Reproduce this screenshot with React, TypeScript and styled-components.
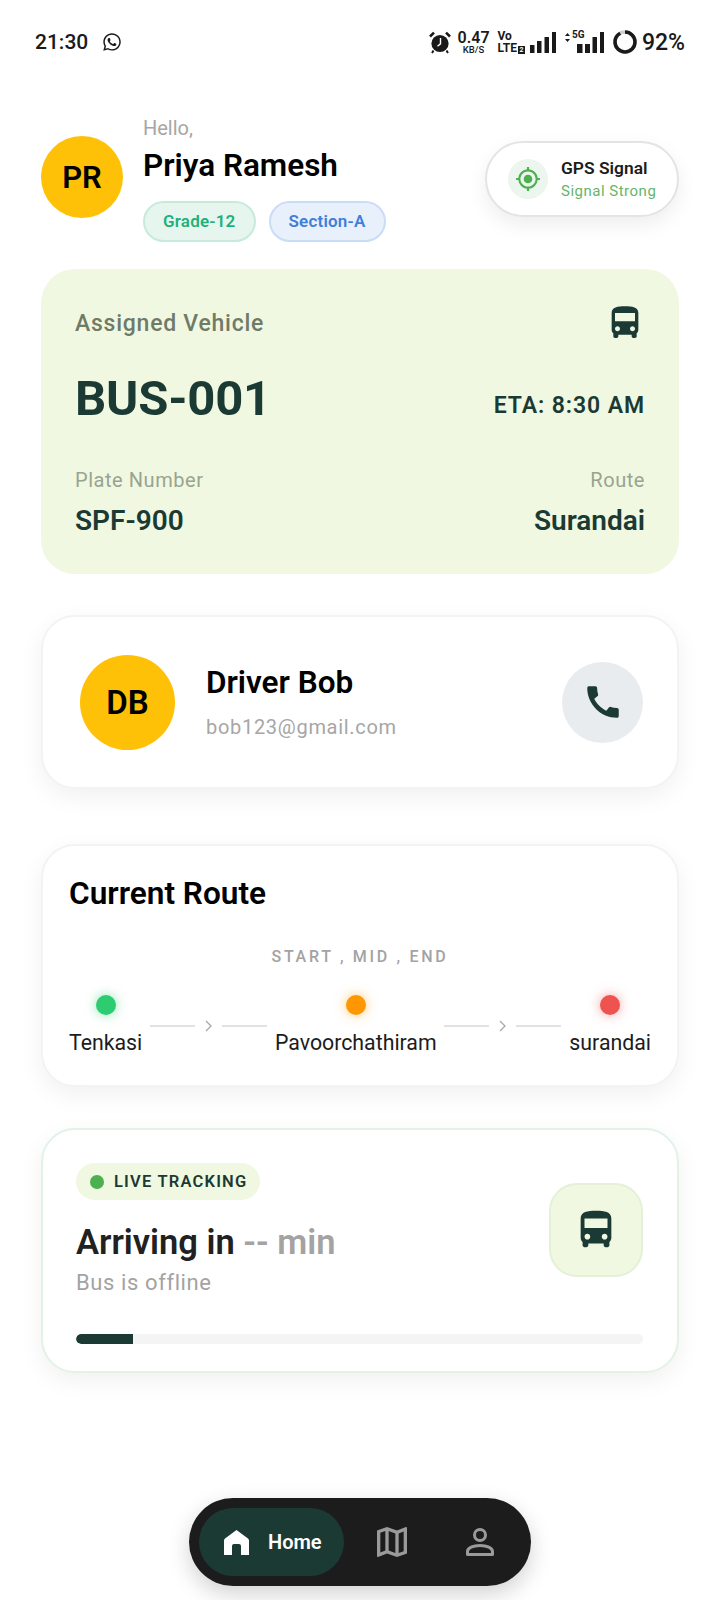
import styled, { createGlobalStyle } from "styled-components";
import { FaWhatsapp } from "react-icons/fa";
import { MdCall, MdDirectionsBus, MdGpsFixed, MdOutlineMap } from "react-icons/md";

const GlobalStyle = createGlobalStyle`
  html, body {
    margin: 0;
    padding: 0;
    background: #fff;
    font-family: Roboto, "Liberation Sans", sans-serif;
  }
  * { box-sizing: border-box; }
`;

const Page = styled.div`
  position: relative;
  width: 720px;
  height: 1600px;
  overflow: hidden;
  background: #fff;
  color: #000;
`;

const StatusBar = styled.div`
  height: 84px;
  padding: 0 35px 0 35px;
  display: flex;
  align-items: center;
  justify-content: space-between;
  color: #1a1a1a;
`;
const StatusLeft = styled.div`
  display: flex;
  align-items: center;
  gap: 14px;
`;
const Clock = styled.span`
  font-size: 21px;
  font-weight: 500;
`;
const StatusRight = styled.div`
  display: flex;
  align-items: center;
`;
const NetSpeed = styled.div`
  display: flex;
  flex-direction: column;
  align-items: center;
  margin-left: 7px;
  font-size: 16px;
  line-height: 15px;
  font-weight: 600;
  span { font-size: 9.5px; line-height: 10px; font-weight: 500; }
`;
const VoLte = styled.div`
  display: flex;
  flex-direction: column;
  margin-left: 8px;
  font-size: 12px;
  line-height: 12px;
  font-weight: 700;
`;
const SimSlot = styled.span`
  display: inline-block;
  width: 7px;
  height: 8px;
  margin-left: 1px;
  background: #1a1a1a;
  color: #fff;
  font-size: 7px;
  line-height: 8px;
  text-align: center;
`;
const BatteryText = styled.span`
  margin-left: 5px;
  font-size: 23px;
  font-weight: 500;
`;
const SignalBox = styled.div`
  position: relative;
  margin-left: 9px;
  width: 39px;
  height: 21px;
  display: flex;
`;
const FiveG = styled.span`
  position: absolute;
  left: 7px;
  top: -2px;
  font-size: 10px;
  line-height: 10px;
  font-weight: 700;
`;

const Content = styled.main`
  padding: 0 41px;
  display: flex;
  flex-direction: column;
`;

const Header = styled.header`
  display: flex;
  align-items: center;
  justify-content: space-between;
  height: 132px;
  margin-top: 27px;
`;
const HeaderLeft = styled.div`
  display: flex;
  align-items: center;
  gap: 20px;
`;
const Avatar = styled.div<{ $size: number; $font: number }>`
  width: ${(p) => p.$size}px;
  height: ${(p) => p.$size}px;
  border-radius: 50%;
  background: #ffc107;
  display: flex;
  align-items: center;
  justify-content: center;
  flex: none;
  font-size: ${(p) => p.$font}px;
  font-weight: 600;
  color: #000;
`;
const Greeting = styled.div`
  margin-top: 3px;
`;
const Hello = styled.div`
  font-size: 20px;
  line-height: 24px;
  color: #a6a6a6;
`;
const UserName = styled.div`
  margin-top: 8px;
  font-size: 31.5px;
  line-height: 36px;
  font-weight: 600;
`;
const Tags = styled.div`
  display: flex;
  gap: 13px;
  margin-top: 17px;
`;
const Tag = styled.span<{ $bg: string; $line: string; $color: string }>`
  height: 41px;
  padding: 0 18px;
  display: flex;
  align-items: center;
  border-radius: 21px;
  background: ${(p) => p.$bg};
  border: 2px solid ${(p) => p.$line};
  color: ${(p) => p.$color};
  font-size: 17px;
  font-weight: 600;
  letter-spacing: 0.2px;
`;
const GpsPill = styled.div`
  width: 194px;
  height: 76px;
  margin-top: 4px;
  padding-left: 21px;
  display: flex;
  align-items: center;
  gap: 13px;
  border-radius: 38px;
  background: #fff;
  border: 2px solid #e4e4e4;
  box-shadow: 0 8px 20px rgba(0, 0, 0, 0.07);
`;
const GpsIcon = styled.div`
  width: 40px;
  height: 40px;
  border-radius: 50%;
  background: #edf6ee;
  color: #4caf50;
  display: flex;
  align-items: center;
  justify-content: center;
`;
const GpsTitle = styled.div`
  font-size: 17.4px;
  line-height: 22px;
  font-weight: 600;
  color: #1c1c1c;
`;
const GpsState = styled.div`
  margin-top: 2px;
  font-size: 15px;
  line-height: 20px;
  letter-spacing: 0.5px;
  color: #66b56a;
`;

const VehicleCard = styled.section`
  margin-top: 26px;
  height: 305px;
  padding: 34px 34px 0 34px;
  border-radius: 34px;
  background: #f1f8e1;
  color: #1b3a34;
`;
const Row = styled.div<{ $top?: number }>`
  display: flex;
  justify-content: space-between;
  align-items: center;
  margin-top: ${(p) => p.$top || 0}px;
`;
const VehicleLabel = styled.span`
  font-size: 23px;
  font-weight: 500;
  letter-spacing: 0.75px;
  color: #6f7a68;
`;
const BusNumber = styled.span`
  font-size: 49px;
  line-height: 58px;
  font-weight: 700;
  letter-spacing: -0.2px;
`;
const Eta = styled.span`
  font-size: 23px;
  font-weight: 600;
  letter-spacing: 0.9px;
  margin-top: 12px;
`;
const SmallLabel = styled.span`
  font-size: 20px;
  line-height: 24px;
  letter-spacing: 0.55px;
  color: #98a491;
`;
const SmallValue = styled.span`
  font-size: 28px;
  line-height: 32px;
  font-weight: 600;
`;

const Card = styled.section<{ $top: number; $height: number }>`
  margin-top: ${(p) => p.$top}px;
  height: ${(p) => p.$height}px;
  border-radius: 34px;
  background: #fff;
  border: 2px solid #f3f3f3;
  box-shadow: 0 8px 24px rgba(0, 0, 0, 0.06);
`;

const DriverCard = styled(Card)`
  display: flex;
  align-items: center;
  padding: 0 34px 0 37px;
`;
const DriverInfo = styled.div`
  flex: 1;
  margin-left: 31px;
`;
const DriverName = styled.div`
  font-size: 31.5px;
  line-height: 36px;
  font-weight: 600;
`;
const DriverMail = styled.div`
  margin-top: 14px;
  font-size: 20px;
  line-height: 24px;
  letter-spacing: 0.7px;
  color: #a6a6a6;
`;
const CallButton = styled.div`
  width: 81px;
  height: 81px;
  border-radius: 50%;
  background: #e9ecee;
  color: #1b3a34;
  display: flex;
  align-items: center;
  justify-content: center;
`;

const RouteCard = styled(Card)`
  padding: 29px 26px 0;
`;
const RouteTitle = styled.h2`
  margin: 0;
  font-size: 31.6px;
  line-height: 38px;
  font-weight: 600;
`;
const RouteHint = styled.div`
  margin-top: 34px;
  text-align: center;
  font-size: 16px;
  line-height: 20px;
  font-weight: 500;
  letter-spacing: 2.7px;
  color: #a3a3a3;
`;
const RouteLine = styled.div`
  display: flex;
  align-items: flex-end;
  justify-content: space-between;
  margin-top: 28px;
`;
const Stop = styled.div`
  display: flex;
  flex-direction: column;
  align-items: center;
  gap: 16px;
`;
const Dot = styled.span<{ $color: string }>`
  width: 20px;
  height: 20px;
  border-radius: 50%;
  background: ${(p) => p.$color};
  box-shadow: 0 0 12px ${(p) => p.$color}88;
`;
const StopName = styled.span`
  font-size: 21.3px;
  line-height: 24px;
  color: #1c1c1c;
`;
const Connector = styled.div`
  display: flex;
  align-items: center;
  gap: 10px;
  height: 20px;
  margin-bottom: 19px;
  color: #a8a8a8;
`;
const ConnectorLine = styled.span`
  width: 45px;
  height: 2px;
  background: #e2e2e2;
`;

const LiveCard = styled(Card)`
  padding: 33px 34px 0 33px;
  border-color: #e3f2e6;
`;
const LiveTop = styled.div`
  display: flex;
  justify-content: space-between;
  align-items: center;
`;
const LiveBadge = styled.div`
  display: inline-flex;
  align-items: center;
  gap: 10px;
  height: 37px;
  padding: 0 13px 0 14px;
  border-radius: 19px;
  background: #f1f8e1;
  color: #1b3a34;
  font-size: 16.5px;
  font-weight: 600;
  letter-spacing: 1.2px;
`;
const LiveDot = styled.span`
  width: 14px;
  height: 14px;
  border-radius: 50%;
  background: #4caf50;
`;
const Arriving = styled.div`
  margin-top: 21px;
  font-size: 34.5px;
  line-height: 42px;
  font-weight: 600;
  color: #212121;
  span { color: #a3a3a3; }
`;
const Offline = styled.div`
  margin-top: 7px;
  font-size: 22px;
  line-height: 26px;
  letter-spacing: 0.6px;
  color: #a3a3a3;
`;
const BusTile = styled.div`
  width: 94px;
  height: 94px;
  border-radius: 28px;
  background: #f1f8e1;
  border: 2px solid #e4f0d8;
  color: #1b3a34;
  display: flex;
  align-items: center;
  justify-content: center;
`;
const Progress = styled.div`
  margin-top: 38px;
  height: 10px;
  border-radius: 5px;
  background: #f4f4f4;
  overflow: hidden;
`;
const ProgressFill = styled.div`
  height: 100%;
  border-radius: 5px 0 0 5px;
  background: #1b3a34;
`;

const BottomNav = styled.nav`
  position: absolute;
  left: 189px;
  bottom: 14px;
  width: 342px;
  height: 88px;
  padding: 10px;
  display: flex;
  align-items: center;
  border-radius: 44px;
  background: #1c1c1c;
  box-shadow: 0 8px 22px rgba(0, 0, 0, 0.18);
`;
const HomeTab = styled.div`
  width: 145px;
  height: 68px;
  padding-left: 25px;
  display: flex;
  align-items: center;
  gap: 19px;
  border-radius: 34px;
  background: #1b3a34;
  color: #fff;
  font-size: 20px;
  font-weight: 600;
`;
const NavIcon = styled.div<{ $left: number }>`
  margin-left: ${(p) => p.$left}px;
  display: flex;
  color: #9a9a9a;
`;

function Bars() {
  return (
    <svg width="26" height="21" viewBox="0 0 26 21" fill="#1a1a1a" style={{ marginLeft: 5 }}>
      <rect x="0" y="13" width="4.5" height="8" />
      <rect x="7" y="9" width="4.5" height="12" />
      <rect x="14.500" y="5" width="4.5" height="16" />
      <rect x="22" y="0" width="4" height="21" />
    </svg>
  );
}

function FiveGBars() {
  return (
    <svg width="39" height="21" viewBox="0 0 39 21" fill="#1a1a1a">
      <path d="M2.500 1 5 4H0zM2.500 10 5 7H0z" />
      <rect x="12" y="12" width="5.500" height="9" />
      <rect x="20" y="12" width="5" height="9" />
      <rect x="27.500" y="5" width="4.500" height="16" />
      <rect x="35" y="0" width="4" height="21" />
    </svg>
  );
}

function AlarmIcon() {
  return (
    <svg width="22" height="23" viewBox="0 0 22 23">
      <circle cx="11" cy="12.500" r="8.600" fill="#1a1a1a" />
      <path d="M1 5.500 5 1.600M21 5.500 17 1.600" stroke="#1a1a1a" strokeWidth="2.600" />
      <path d="M4.500 19.500 3 22M17.500 19.500 19 22" stroke="#1a1a1a" strokeWidth="2" />
      <path d="M11.500 7v5.800l-3 2.400" stroke="#fff" strokeWidth="1.400" fill="none" />
    </svg>
  );
}

function BatteryRing() {
  return (
    <svg width="24" height="24" viewBox="0 0 24 24" fill="none" style={{ marginLeft: 9 }}>
      <circle cx="12" cy="12" r="10" stroke="#cfcfcf" strokeWidth="3.500" />
      <circle
        cx="12"
        cy="12"
        r="10"
        stroke="#1a1a1a"
        strokeWidth="3.500"
        pathLength="100"
        strokeDasharray="92 100"
        transform="rotate(-90 12 12)"
      />
    </svg>
  );
}

function HomeIcon() {
  return (
    <svg width="25" height="26" viewBox="0 0 25 26" fill="#fff">
      <path d="M12.500 1 24 9.500c.6.500 1 1.200 1 2V26H17V17a2 2 0 0 0-2-2h-5a2 2 0 0 0-2 2v9H0V11.500c0-.8.4-1.500 1-2z" />
    </svg>
  );
}

function PersonIcon() {
  return (
    <svg width="28" height="28" viewBox="0 0 28 28" fill="none" stroke="#9a9a9a" strokeWidth="3">
      <circle cx="14" cy="7" r="5.500" />
      <path d="M1.500 26.500v-3c0-3.500 5.500-6 12.500-6s12.500 2.500 12.500 6v3z" strokeLinejoin="round" />
    </svg>
  );
}

function Chevron() {
  return (
    <svg width="7" height="12" viewBox="0 0 7 12" fill="none" stroke="#a8a8a8" strokeWidth="1.300">
      <path d="M1 1l5 5-5 5" />
    </svg>
  );
}

function RouteConnector() {
  return (
    <Connector>
      <ConnectorLine />
      <Chevron />
      <ConnectorLine />
    </Connector>
  );
}

export default function App() {
  return (
    <Page>
      <GlobalStyle />
      <StatusBar>
        <StatusLeft>
          <Clock>21:30</Clock>
          <FaWhatsapp size={20} />
        </StatusLeft>
        <StatusRight>
          <AlarmIcon />
          <NetSpeed>
            0.47
            <span>KB/S</span>
          </NetSpeed>
          <VoLte>
            <span>Vo</span>
            <span>
              LTE<SimSlot>2</SimSlot>
            </span>
          </VoLte>
          <Bars />
          <SignalBox>
            <FiveGBars />
            <FiveG>5G</FiveG>
          </SignalBox>
          <BatteryRing />
          <BatteryText>92%</BatteryText>
        </StatusRight>
      </StatusBar>

      <Content>
        <Header>
          <HeaderLeft>
            <Avatar $size={82} $font={31}>PR</Avatar>
            <Greeting>
              <Hello>Hello,</Hello>
              <UserName>Priya Ramesh</UserName>
              <Tags>
                <Tag $bg="#e6f6ef" $line="#c6eadb" $color="#1fb07c">Grade-12</Tag>
                <Tag $bg="#e8f0fc" $line="#cbdcf6" $color="#3f7fd8">Section-A</Tag>
              </Tags>
            </Greeting>
          </HeaderLeft>
          <GpsPill>
            <GpsIcon>
              <MdGpsFixed size={26} />
            </GpsIcon>
            <div>
              <GpsTitle>GPS Signal</GpsTitle>
              <GpsState>Signal Strong</GpsState>
            </div>
          </GpsPill>
        </Header>

        <VehicleCard>
          <Row>
            <VehicleLabel>Assigned Vehicle</VehicleLabel>
            <MdDirectionsBus size={40} />
          </Row>
          <Row $top={27}>
            <BusNumber>BUS-001</BusNumber>
            <Eta>ETA: 8:30 AM</Eta>
          </Row>
          <Row $top={40}>
            <SmallLabel>Plate Number</SmallLabel>
            <SmallLabel>Route</SmallLabel>
          </Row>
          <Row $top={13}>
            <SmallValue>SPF-900</SmallValue>
            <SmallValue>Surandai</SmallValue>
          </Row>
        </VehicleCard>

        <DriverCard $top={41} $height={174}>
          <Avatar $size={95} $font={33}>DB</Avatar>
          <DriverInfo>
            <DriverName>Driver Bob</DriverName>
            <DriverMail>bob123@gmail.com</DriverMail>
          </DriverInfo>
          <CallButton>
            <MdCall size={42} />
          </CallButton>
        </DriverCard>

        <RouteCard $top={55} $height={243}>
          <RouteTitle>Current Route</RouteTitle>
          <RouteHint>START , MID , END</RouteHint>
          <RouteLine>
            <Stop>
              <Dot $color="#2ecc71" />
              <StopName>Tenkasi</StopName>
            </Stop>
            <RouteConnector />
            <Stop>
              <Dot $color="#ff9800" />
              <StopName>Pavoorchathiram</StopName>
            </Stop>
            <RouteConnector />
            <Stop>
              <Dot $color="#ef5350" />
              <StopName>surandai</StopName>
            </Stop>
          </RouteLine>
        </RouteCard>

        <LiveCard $top={41} $height={245}>
          <LiveTop>
            <div>
              <LiveBadge>
                <LiveDot />
                LIVE TRACKING
              </LiveBadge>
              <Arriving>
                Arriving in <span>-- min</span>
              </Arriving>
              <Offline>Bus is offline</Offline>
            </div>
            <BusTile>
              <MdDirectionsBus size={46} />
            </BusTile>
          </LiveTop>
          <Progress>
            <ProgressFill style={{ width: "10%" }} />
          </Progress>
        </LiveCard>
      </Content>

      <BottomNav>
        <HomeTab>
          <HomeIcon />
          Home
        </HomeTab>
        <NavIcon $left={28}>
          <MdOutlineMap size={40} />
        </NavIcon>
        <NavIcon $left={54}>
          <PersonIcon />
        </NavIcon>
      </BottomNav>
    </Page>
  );
}
